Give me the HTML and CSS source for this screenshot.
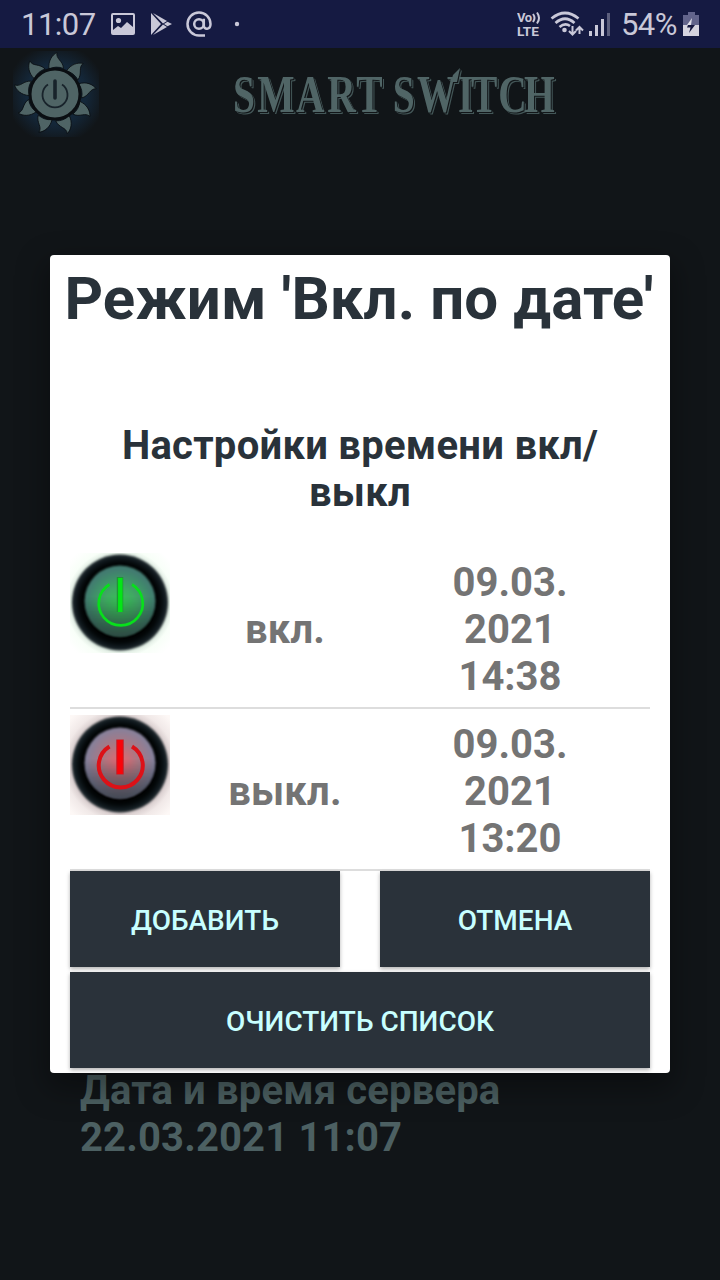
FILE: index.html
```html
<!DOCTYPE html>
<html lang="ru">
<head>
<meta charset="utf-8">
<title>Smart Switch</title>
<link rel="stylesheet" href="styles.css">
</head>
<body>
<div class="status">
  <span class="clock">11:07</span>
  <svg class="notif" width="140" height="48" viewBox="0 0 140 48" fill="#c9c8d8">
    <path fill-rule="evenodd" d="M3 13H23Q25 13 25 15V33Q25 35 23 35H3Q1 35 1 33V15Q1 13 3 13ZM3 15V30L8 26L11 28L17 22L23 27V15Z"/>
    <circle cx="8.5" cy="20.5" r="2.6"/>
    <path d="M41 13L51 24L41 35ZM43 13L57 21L53 23.5ZM54 24L57.5 21.7L62 24L57.5 26.3ZM43 35L57 27L53 24.5Z"/>
    <g fill="none" stroke="#c9c8d8" stroke-width="2.5"><circle cx="89" cy="24" r="4.8"/><path d="M93.8 18.8V25.5C93.8 30 100.5 30 100.5 24A11.5 11.5 0 1 0 89 35.5H95"/></g>
    <circle cx="127" cy="24" r="2.2"/>
  </svg>
  <div class="system">
    <svg width="98" height="48" viewBox="0 0 98 48" fill="#c9c8d8">
      <text class="volte" x="0" y="22" textLength="15">Vo</text>
      <text class="volte" x="0" y="36" textLength="22" lengthAdjust="spacingAndGlyphs">LTE</text>
      <path d="M16 14Q19 18 16 22M20 12.5Q24 18 20 23.5" fill="none" stroke="#c9c8d8" stroke-width="2"/>
      <path d="M34.500 18.500Q48 7.500 61.500 18.500M38.500 23Q48 14.500 57.500 23M42.500 27Q48 22.500 53 26" fill="none" stroke="#c9c8d8" stroke-width="2.7"/>
      <circle cx="47.500" cy="30" r="2.3"/>
      <path d="M55.500 26V34M52 31L55.500 34.500L59 31M62.500 34V27.500M59 30.500L62.500 27L66 30.500" fill="none" stroke="#c9c8d8" stroke-width="2"/>
      <path d="M72 31H75V36H72ZM78 25H81V36H78ZM84 19H87V36H84Z"/><path d="M90 13H93V36H90Z" opacity=".4"/>
    </svg>
    <span class="percent">54%</span>
    <svg class="battery" width="17" height="48" viewBox="0 0 17 48"><path d="M5 12H12V15H16V25H0V15H5Z" fill="#62648b"/><path d="M0 25H16V36H0Z" fill="#d5d4df"/><path d="M9 18L4 25H8Z" fill="#e0dfe9"/><path d="M7 25H12L6 33L7.500 27.500H4L5 25Z" fill="#15173f"/></svg>
  </div>
</div>
<header class="header">
  <svg class="logo" width="86" height="86" viewBox="0 0 86 86">
    <defs>
      <radialGradient id="glow" r=".58"><stop offset=".6" stop-color="#142739"/><stop offset="1" stop-color="#111518"/></radialGradient>
      <path id="ray" d="M36 18C35 10 39 4 44 1.500C42.500 8 50 9.500 50.500 17.500Q43 14.500 36 18Z"/>
    </defs>
    <rect width="86" height="86" fill="url(#glow)"/>
    <g fill="#4f6465" stroke="#090e12" stroke-width=".8">
      <use href="#ray"/><use href="#ray" transform="rotate(40 42 43)"/><use href="#ray" transform="rotate(80 42 43)"/>
      <use href="#ray" transform="rotate(120 42 43)"/><use href="#ray" transform="rotate(160 42 43)"/><use href="#ray" transform="rotate(200 42 43)"/>
      <use href="#ray" transform="rotate(240 42 43)"/><use href="#ray" transform="rotate(280 42 43)"/><use href="#ray" transform="rotate(320 42 43)"/>
    </g>
    <circle cx="42" cy="43" r="25" fill="#4f6465" stroke="#0a0e12" stroke-width="3"/>
    <path d="M35 33.500A12.500 12.500 0 1 0 49 33.500" fill="none" stroke="#18232b" stroke-width="1.800"/>
    <path d="M42 30V47" stroke="#18232b" stroke-width="3.600" stroke-linecap="round"/>
  </svg>
  <svg class="brand" width="340" height="66" viewBox="0 0 340 66">
    <g class="brand-outline">
      <text transform="scale(.76 1)" x="4 36 87 128 166 200 214 246 300 317 353 387" y="50">SMART SWITCH</text>
      <path d="M221 20L223 13L230 6L227 20Z"/>
    </g>
  </svg>
</header>
<main class="screen">
  <section class="dialog">
    <h1>Режим 'Вкл. по дате'</h1>
    <h2>Настройки времени вкл/<br>выкл</h2>
    <div class="row">
      <svg class="power" width="100" height="100" viewBox="0 0 100 100">
        <defs><radialGradient id="green" cy=".55"><stop stop-color="#36c653"/><stop offset=".45" stop-color="#40a963"/><stop offset="1" stop-color="#427b70"/></radialGradient>
        <radialGradient id="greenHalo" r=".66"><stop offset=".7" stop-color="#d5e4d9"/><stop offset=".82" stop-color="#f8fff8"/><stop offset="1" stop-color="#fff"/></radialGradient>
        <linearGradient id="shade" x2="0" y2="1"><stop offset=".45" stop-color="#101a20" stop-opacity="0"/><stop offset="1" stop-color="#242b2d" stop-opacity=".65"/></linearGradient>
        <radialGradient id="rim"><stop offset=".72" stop-color="#000"/><stop offset=".83" stop-color="#030708"/><stop offset=".93" stop-color="#10191e"/><stop offset="1" stop-color="#273034"/></radialGradient></defs>
        <rect width="100" height="100" fill="url(#greenHalo)"/><circle class="lens" cx="50" cy="49.500" r="48" fill="url(#rim)"/>
        <circle class="lens" cx="50" cy="48" r="35.500" fill="url(#green)"/><circle class="lens" cx="50" cy="48" r="35.500" fill="url(#shade)"/>
        <g class="glyph"><path d="M39.500 31.500A22 22 0 1 0 62 31.500" fill="none" stroke="#08df1c" stroke-width="2.700"/><path d="M50 24V59" stroke="#1f9535" stroke-width="6.500"/><path d="M50.300 25V59" stroke="#04e616" stroke-width="4.500"/></g>
      </svg>
      <span class="label">вкл.</span><span class="date">09.03.<br>2021<br>14:38</span>
    </div>
    <div class="row">
      <svg class="power" width="100" height="100" viewBox="0 0 100 100">
        <defs><radialGradient id="red" cy=".48"><stop stop-color="#e66670"/><stop offset=".5" stop-color="#aa7883"/><stop offset="1" stop-color="#81829e"/></radialGradient><radialGradient id="redHalo" r=".68"><stop offset=".68" stop-color="#cfc3c4"/><stop offset=".82" stop-color="#f1e9e8"/><stop offset="1" stop-color="#fdf8f6"/></radialGradient></defs>
        <rect width="100" height="100" fill="url(#redHalo)"/><circle class="lens" cx="50" cy="49.500" r="48" fill="url(#rim)"/>
        <circle class="lens" cx="50" cy="48" r="35.500" fill="url(#red)"/><circle class="lens" cx="50" cy="48" r="35.500" fill="url(#shade)"/>
        <g class="glyph"><path d="M39.500 31.500A22 22 0 1 0 62 31.500" fill="none" stroke="#dc1117" stroke-width="4"/><path d="M50 24.500V59.500" stroke="#c31e26" stroke-width="7.500"/><path d="M50 25V59" stroke="#fa0308" stroke-width="5.500"/></g>
      </svg>
      <span class="label">выкл.</span><span class="date">09.03.<br>2021<br>13:20</span>
    </div>
    <div class="actions"><button>ДОБАВИТЬ</button><button>ОТМЕНА</button><button class="wide">ОЧИСТИТЬ СПИСОК</button></div>
  </section>
  <p class="server">Дата и время сервера<br>22.03.2021 11:07</p>
</main>
</body>
</html>
```
FILE: styles.css
```css
* { box-sizing: border-box; }
body { margin: 0; width: 720px; height: 1280px; overflow: hidden; background: #111518; font-family: Roboto, sans-serif; }
svg { display: block; flex: none; }
.status { height: 48px; background: #151a42; color: #c9c8d8; display: flex; align-items: center; padding: 0 20px 0 21px; }
.clock { font-size: 31px; width: 89px; white-space: nowrap; letter-spacing: -.5px; }
.system { display: flex; align-items: center; margin-left: auto; }
.volte { font: 700 13px Roboto, sans-serif; }
.percent { box-sizing: content-box; width: 62px; font-size: 31px; white-space: nowrap; padding-left: 6px; letter-spacing: -.6px; }
.header { height: 207px; display: flex; align-items: flex-start; padding: 3px 0 0 13px; }
.brand { margin: 11px 0 0 131px; }
.brand-outline { font: 700 52px "Liberation Serif", serif; fill: #506566; filter: drop-shadow(1px 1px 0 #111518) drop-shadow(1px 1px 0 #435657); }
.screen { padding: 0 50px; }
.dialog { position: relative; height: 818px; background: #fff; border-radius: 4px; padding: 9px 20px 5px; box-shadow: 0 12px 30px 4px rgba(0,0,0,.35); }
h1, h2, p { margin: 0; }
h1 { font-size: 60px; line-height: 70px; margin: 0 -20px; text-align: center; color: #29323a; white-space: nowrap; letter-spacing: .1px; text-indent: -2px; }
h2 { font-size: 40px; line-height: 47px; margin-top: 88px; height: 125px; text-align: center; color: #29323a; letter-spacing: .27px; }
.row { height: 162px; border-bottom: 2px solid #ddd; display: flex; align-items: flex-start; padding-top: 6px; color: #747474; font-size: 40px; line-height: 47px; font-weight: 700; text-align: center; }
.label { width: 230px; padding-top: 53px; letter-spacing: .2px; }
.date { width: 220px; padding-top: 6px; }
.lens { filter: blur(.8px); }
.glyph { filter: blur(.4px); }
.actions { display: grid; grid-template-columns: 1fr 1fr; gap: 5px 40px; }
button { height: 96px; padding: 2px 0 0; border: 0; background: #2a323a; color: #c8ffff; font: 500 28px Roboto, sans-serif; box-shadow: 0 2px 4px rgba(0,0,0,.3); }
.wide { grid-column: 1 / 3; }
.server { padding: 0 30px; margin-top: -6px; font-size: 40px; line-height: 47px; font-weight: 700; color: #4c6062; letter-spacing: .15px; }
```
